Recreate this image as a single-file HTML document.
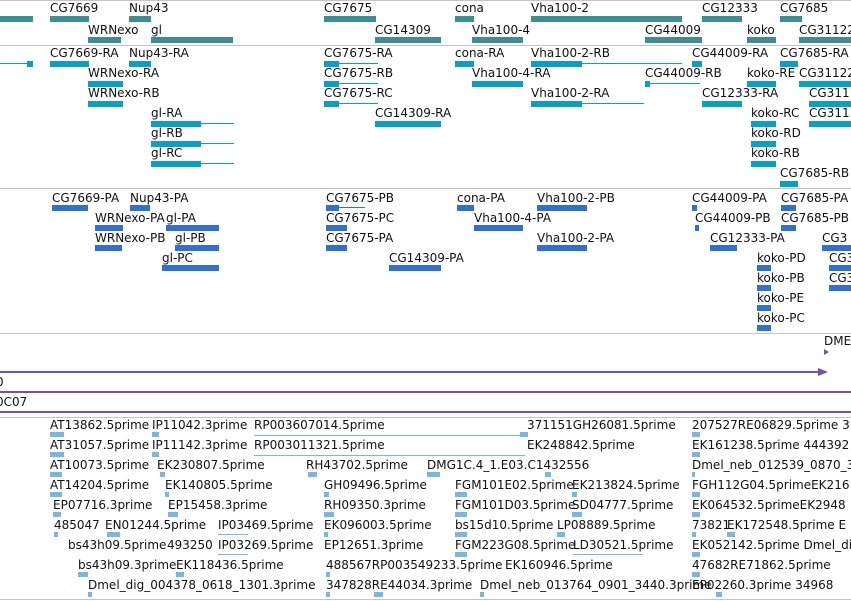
<!DOCTYPE html>
<html><head><meta charset="utf-8"><style>
body{margin:0;width:851px;height:601px;overflow:hidden;background:#fff;position:relative;font-family:"DejaVu Sans","Liberation Sans",sans-serif}
.t{position:absolute;font-size:12px;line-height:14px;color:#111;white-space:nowrap}
.b{position:absolute;height:6px}
.g{background:#3d8e93}.r{background:#09a0c4}.p{background:#3070d0}.e{background:#7ab7de;height:5px}
.l{position:absolute;height:1px}
.hr{position:absolute;left:0;width:851px;height:1px;background:#c4c4c4}
.pu{position:absolute;left:0;width:851px;height:2px;background:#7050b0}
</style></head><body>
<div class="hr" style="top:0"></div><div class="hr" style="top:45"></div>
<div class="hr" style="top:45px"></div><div class="hr" style="top:188px"></div><div class="hr" style="top:333px"></div><div class="hr" style="top:417px"></div><div class="hr" style="top:599px"></div>

<!-- track 1 -->
<div class="t" style="left:50px;top:1px">CG7669</div><div class="t" style="left:129px;top:1px">Nup43</div><div class="t" style="left:324px;top:1px">CG7675</div><div class="t" style="left:455px;top:1px">cona</div><div class="t" style="left:531px;top:1px">Vha100-2</div><div class="t" style="left:702px;top:1px">CG12333</div><div class="t" style="left:780px;top:1px">CG7685</div>
<div class="b g" style="left:0;width:33px;top:16px"></div><div class="b g" style="left:50px;width:39px;top:16px"></div><div class="b g" style="left:129px;width:22px;top:16px"></div><div class="b g" style="left:324px;width:52px;top:16px"></div><div class="b g" style="left:455px;width:19px;top:16px"></div><div class="b g" style="left:531px;width:151px;top:16px"></div><div class="b g" style="left:702px;width:40px;top:16px"></div><div class="b g" style="left:780px;width:22px;top:16px"></div>
<div class="t" style="left:88px;top:23px">WRNexo</div><div class="t" style="left:151px;top:23px">gl</div><div class="t" style="left:375px;top:23px">CG14309</div><div class="t" style="left:472px;top:23px">Vha100-4</div><div class="t" style="left:645px;top:23px">CG44009</div><div class="t" style="left:747px;top:23px">koko</div><div class="t" style="left:799px;top:23px">CG31122</div>
<div class="b g" style="left:88px;width:33px;top:37px"></div><div class="b g" style="left:151px;width:82px;top:37px"></div><div class="b g" style="left:375px;width:66px;top:37px"></div><div class="b g" style="left:472px;width:51px;top:37px"></div><div class="b g" style="left:645px;width:57px;top:37px"></div><div class="b g" style="left:747px;width:29px;top:37px"></div><div class="b g" style="left:799px;width:52px;top:37px"></div>

<!-- track 2 -->
<div class="t" style="left:50px;top:46px">CG7669-RA</div><div class="t" style="left:129px;top:46px">Nup43-RA</div><div class="t" style="left:324px;top:46px">CG7675-RA</div><div class="t" style="left:455px;top:46px">cona-RA</div><div class="t" style="left:531px;top:46px">Vha100-2-RB</div><div class="t" style="left:692px;top:46px">CG44009-RA</div><div class="t" style="left:780px;top:46px">CG7685-RA</div>
<div class="l r" style="left:0;width:33px;top:63px"></div><div class="b r" style="left:27px;width:6px;top:61px"></div><div class="b r" style="left:50px;width:39px;top:61px"></div><div class="b r" style="left:129px;width:22px;top:61px"></div><div class="b r" style="left:324px;width:15px;top:61px"></div><div class="l r" style="left:339px;width:39px;top:63px"></div><div class="b r" style="left:455px;width:19px;top:61px"></div><div class="b r" style="left:531px;width:51px;top:61px"></div><div class="l r" style="left:582px;width:100px;top:63px"></div><div class="b r" style="left:692px;width:10px;top:61px"></div><div class="b r" style="left:780px;width:18px;top:61px"></div>
<div class="t" style="left:88px;top:66px">WRNexo-RA</div><div class="t" style="left:324px;top:66px">CG7675-RB</div><div class="t" style="left:472px;top:66px">Vha100-4-RA</div><div class="t" style="left:645px;top:66px">CG44009-RB</div><div class="t" style="left:747px;top:66px">koko-RE</div><div class="t" style="left:799px;top:66px">CG31122</div>
<div class="b r" style="left:88px;width:35px;top:81px"></div><div class="b r" style="left:324px;width:15px;top:81px"></div><div class="l r" style="left:339px;width:39px;top:83px"></div><div class="b r" style="left:472px;width:51px;top:81px"></div><div class="l r" style="left:645px;width:55px;top:83px"></div><div class="b r" style="left:645px;width:5px;top:81px"></div><div class="b r" style="left:747px;width:29px;top:81px"></div><div class="b r" style="left:799px;width:52px;top:81px"></div>
<div class="t" style="left:88px;top:86px">WRNexo-RB</div><div class="t" style="left:324px;top:86px">CG7675-RC</div><div class="t" style="left:531px;top:86px">Vha100-2-RA</div><div class="t" style="left:702px;top:86px">CG12333-RA</div><div class="t" style="left:809px;top:86px">CG311</div>
<div class="b r" style="left:88px;width:35px;top:101px"></div><div class="b r" style="left:324px;width:15px;top:101px"></div><div class="l r" style="left:339px;width:39px;top:103px"></div><div class="b r" style="left:531px;width:51px;top:101px"></div><div class="l r" style="left:582px;width:62px;top:103px"></div><div class="b r" style="left:702px;width:40px;top:101px"></div><div class="b r" style="left:809px;width:42px;top:101px"></div>
<div class="t" style="left:151px;top:106px">gl-RA</div><div class="t" style="left:375px;top:106px">CG14309-RA</div><div class="t" style="left:751px;top:106px">koko-RC</div><div class="t" style="left:809px;top:106px">CG311</div>
<div class="b r" style="left:151px;width:50px;top:121px"></div><div class="l r" style="left:201px;width:33px;top:123px"></div><div class="b r" style="left:375px;width:66px;top:121px"></div><div class="b r" style="left:751px;width:25px;top:121px"></div><div class="b r" style="left:809px;width:42px;top:121px"></div>
<div class="t" style="left:151px;top:126px">gl-RB</div><div class="t" style="left:751px;top:126px">koko-RD</div>
<div class="b r" style="left:151px;width:50px;top:141px"></div><div class="l r" style="left:201px;width:33px;top:143px"></div><div class="b r" style="left:751px;width:25px;top:141px"></div>
<div class="t" style="left:151px;top:146px">gl-RC</div><div class="t" style="left:751px;top:146px">koko-RB</div>
<div class="b r" style="left:151px;width:50px;top:161px"></div><div class="l r" style="left:201px;width:33px;top:163px"></div><div class="b r" style="left:751px;width:25px;top:161px"></div>
<div class="t" style="left:780px;top:166px">CG7685-RB</div><div class="b r" style="left:780px;width:18px;top:181px"></div>

<!-- track 3 -->
<div class="t" style="left:52px;top:191px">CG7669-PA</div><div class="t" style="left:130px;top:191px">Nup43-PA</div><div class="t" style="left:326px;top:191px">CG7675-PB</div><div class="t" style="left:457px;top:191px">cona-PA</div><div class="t" style="left:537px;top:191px">Vha100-2-PB</div><div class="t" style="left:692px;top:191px">CG44009-PA</div><div class="t" style="left:781px;top:191px">CG7685-PA</div>
<div class="b p" style="left:52px;width:36px;top:205px"></div><div class="b p" style="left:130px;width:20px;top:205px"></div><div class="b p" style="left:326px;width:13px;top:205px"></div><div class="l p" style="left:339px;width:26px;top:207px"></div><div class="b p" style="left:457px;width:17px;top:205px"></div><div class="b p" style="left:537px;width:50px;top:205px"></div><div class="b p" style="left:692px;width:5px;top:205px"></div><div class="b p" style="left:781px;width:15px;top:205px"></div>
<div class="t" style="left:95px;top:211px">WRNexo-PA</div><div class="t" style="left:166px;top:211px">gl-PA</div><div class="t" style="left:326px;top:211px">CG7675-PC</div><div class="t" style="left:474px;top:211px">Vha100-4-PA</div><div class="t" style="left:695px;top:211px">CG44009-PB</div><div class="t" style="left:781px;top:211px">CG7685-PB</div>
<div class="b p" style="left:95px;width:28px;top:225px"></div><div class="b p" style="left:166px;width:53px;top:225px"></div><div class="b p" style="left:326px;width:21px;top:225px"></div><div class="b p" style="left:474px;width:49px;top:225px"></div><div class="b p" style="left:695px;width:4px;top:225px"></div><div class="b p" style="left:781px;width:15px;top:225px"></div>
<div class="t" style="left:95px;top:231px">WRNexo-PB</div><div class="t" style="left:175px;top:231px">gl-PB</div><div class="t" style="left:326px;top:231px">CG7675-PA</div><div class="t" style="left:537px;top:231px">Vha100-2-PA</div><div class="t" style="left:710px;top:231px">CG12333-PA</div><div class="t" style="left:822px;top:231px">CG3</div>
<div class="b p" style="left:95px;width:27px;top:245px"></div><div class="b p" style="left:175px;width:44px;top:245px"></div><div class="b p" style="left:326px;width:21px;top:245px"></div><div class="b p" style="left:537px;width:50px;top:245px"></div><div class="b p" style="left:710px;width:27px;top:245px"></div><div class="b p" style="left:822px;width:29px;top:245px"></div>
<div class="t" style="left:162px;top:251px">gl-PC</div><div class="t" style="left:389px;top:251px">CG14309-PA</div><div class="t" style="left:757px;top:251px">koko-PD</div><div class="t" style="left:829px;top:251px">CG3</div>
<div class="b p" style="left:162px;width:57px;top:265px"></div><div class="b p" style="left:389px;width:52px;top:265px"></div><div class="b p" style="left:757px;width:14px;top:265px"></div><div class="b p" style="left:829px;width:22px;top:265px"></div>
<div class="t" style="left:757px;top:271px">koko-PB</div><div class="t" style="left:829px;top:271px">CG3</div>
<div class="b p" style="left:757px;width:14px;top:285px"></div><div class="b p" style="left:829px;width:22px;top:285px"></div>
<div class="t" style="left:757px;top:291px">koko-PE</div><div class="b p" style="left:757px;width:14px;top:305px"></div>
<div class="t" style="left:757px;top:311px">koko-PC</div><div class="b p" style="left:757px;width:14px;top:325px"></div>

<!-- purple -->
<div class="t" style="left:824px;top:334px">DME</div>
<div style="position:absolute;left:824px;top:349px;width:0;height:0;border-left:5px solid #7050b0;border-top:3px solid transparent;border-bottom:3px solid transparent"></div>
<div class="pu" style="top:371px;width:820px"></div>
<div style="position:absolute;left:818px;top:368px;width:0;height:0;border-left:10px solid #7050b0;border-top:4px solid transparent;border-bottom:4px solid transparent"></div>
<div class="t" style="left:-4px;top:375px">0</div>
<div class="pu" style="top:391px"></div>
<div class="t" style="left:-4px;top:395px">0C07</div>
<div class="pu" style="top:411px"></div>

<!-- ESTs -->
<div class="t" style="left:50px;top:418px">AT13862.5prime</div><div class="t" style="left:152px;top:418px">IP11042.3prime</div><div class="t" style="left:254px;top:418px">RP003607014.5prime</div><div class="t" style="left:527px;top:418px">371151GH26081.5prime</div><div class="t" style="left:692px;top:418px">207527RE06829.5prime 3</div>
<div class="b e" style="left:50px;width:14px;top:432px"></div><div class="b e" style="left:152px;width:7px;top:432px"></div><div class="l e" style="left:254px;width:271px;top:435px;height:1px"></div><div class="b e" style="left:520px;width:8px;top:432px"></div><div class="b e" style="left:692px;width:8px;top:432px"></div>
<div class="t" style="left:50px;top:438px">AT31057.5prime</div><div class="t" style="left:152px;top:438px">IP11142.3prime</div><div class="t" style="left:254px;top:438px">RP003011321.5prime</div><div class="t" style="left:527px;top:438px">EK248842.5prime</div><div class="t" style="left:692px;top:438px">EK161238.5prime 444392</div>
<div class="b e" style="left:50px;width:14px;top:452px"></div><div class="b e" style="left:152px;width:7px;top:452px"></div><div class="l e" style="left:254px;width:271px;top:455px;height:1px"></div><div class="b e" style="left:692px;width:8px;top:452px"></div>
<div class="t" style="left:50px;top:458px">AT10073.5prime</div><div class="t" style="left:157px;top:458px">EK230807.5prime</div><div class="t" style="left:306px;top:458px">RH43702.5prime</div><div class="t" style="left:427px;top:458px">DMG1C.4_1.E03.C1432556</div><div class="t" style="left:692px;top:458px">Dmel_neb_012539_0870_3</div>
<div class="b e" style="left:50px;width:12px;top:472px"></div><div class="b e" style="left:160px;width:5px;top:472px"></div><div class="b e" style="left:308px;width:9px;top:472px"></div><div class="b e" style="left:427px;width:13px;top:472px"></div><div class="b e" style="left:545px;width:6px;top:472px"></div><div class="b e" style="left:692px;width:3px;top:472px"></div>
<div class="t" style="left:50px;top:478px">AT14204.5prime</div><div class="t" style="left:165px;top:478px">EK140805.5prime</div><div class="t" style="left:324px;top:478px">GH09496.5prime</div><div class="t" style="left:455px;top:478px">FGM101E02.5prime</div><div class="t" style="left:572px;top:478px">EK213824.5prime</div><div class="t" style="left:692px;top:478px">FGH112G04.5primeEK216</div>
<div class="b e" style="left:50px;width:12px;top:492px"></div><div class="b e" style="left:165px;width:4px;top:492px"></div><div class="b e" style="left:324px;width:5px;top:492px"></div><div class="b e" style="left:455px;width:12px;top:492px"></div><div class="b e" style="left:572px;width:5px;top:492px"></div><div class="b e" style="left:692px;width:8px;top:492px"></div>
<div class="t" style="left:53px;top:498px">EP07716.3prime</div><div class="t" style="left:168px;top:498px">EP15458.3prime</div><div class="t" style="left:324px;top:498px">RH09350.3prime</div><div class="t" style="left:455px;top:498px">FGM101D03.5prime</div><div class="t" style="left:572px;top:498px">SD04777.5prime</div><div class="t" style="left:692px;top:498px">EK064532.5primeEK2948</div>
<div class="b e" style="left:53px;width:8px;top:512px"></div><div class="b e" style="left:168px;width:10px;top:512px"></div><div class="b e" style="left:324px;width:10px;top:512px"></div><div class="b e" style="left:455px;width:12px;top:512px"></div><div class="b e" style="left:572px;width:10px;top:512px"></div><div class="b e" style="left:692px;width:8px;top:512px"></div>
<div class="t" style="left:54px;top:518px">485047</div><div class="t" style="left:105px;top:518px">EN01244.5prime</div><div class="t" style="left:218px;top:518px">IP03469.5prime</div><div class="t" style="left:324px;top:518px">EK096003.5prime</div><div class="t" style="left:455px;top:518px">bs15d10.5prime</div><div class="t" style="left:557px;top:518px">LP08889.5prime</div><div class="t" style="left:692px;top:518px">73821</div><div class="t" style="left:727px;top:518px">EK172548.5prime E</div>
<div class="b e" style="left:54px;width:4px;top:532px"></div><div class="b e" style="left:107px;width:13px;top:532px"></div><div class="l e" style="left:218px;width:30px;top:534px;height:1px"></div><div class="b e" style="left:324px;width:4px;top:532px"></div><div class="b e" style="left:455px;width:12px;top:532px"></div><div class="b e" style="left:557px;width:8px;top:532px"></div><div class="b e" style="left:692px;width:4px;top:532px"></div><div class="b e" style="left:727px;width:8px;top:532px"></div>
<div class="t" style="left:68px;top:538px">bs43h09.5prime</div><div class="t" style="left:167px;top:538px">493250</div><div class="t" style="left:218px;top:538px">IP03269.5prime</div><div class="t" style="left:324px;top:538px">EP12651.3prime</div><div class="t" style="left:455px;top:538px">FGM223G08.5prime</div><div class="t" style="left:573px;top:538px">LD30521.5prime</div><div class="t" style="left:692px;top:538px">EK052142.5prime Dmel_di</div>
<div class="b e" style="left:455px;width:12px;top:552px"></div><div class="l e" style="left:218px;width:30px;top:554px;height:1px"></div><div class="l e" style="left:573px;width:70px;top:554px;height:1px"></div><div class="b e" style="left:692px;width:8px;top:552px"></div>
<div class="t" style="left:78px;top:558px">bs43h09.3prime</div><div class="t" style="left:176px;top:558px">EK118436.5prime</div><div class="t" style="left:326px;top:558px">488567RP003549233.5prime</div><div class="t" style="left:505px;top:558px">EK160946.5prime</div><div class="t" style="left:692px;top:558px">47682RE71862.5prime</div>
<div class="b e" style="left:78px;width:10px;top:572px"></div><div class="b e" style="left:176px;width:8px;top:572px"></div><div class="b e" style="left:326px;width:4px;top:572px"></div><div class="b e" style="left:692px;width:8px;top:572px"></div>
<div class="t" style="left:88px;top:578px">Dmel_dig_004378_0618_1301.3prime</div><div class="t" style="left:326px;top:578px">347828RE44034.3prime</div><div class="t" style="left:480px;top:578px">Dmel_neb_013764_0901_3440.3prime</div><div class="t" style="left:692px;top:578px">EP02260.3prime 34968</div>
<div class="b e" style="left:88px;width:4px;top:592px"></div><div class="b e" style="left:326px;width:4px;top:592px"></div><div class="b e" style="left:374px;width:9px;top:592px"></div><div class="b e" style="left:480px;width:4px;top:592px"></div><div class="b e" style="left:716px;width:6px;top:592px"></div>
</body></html>
